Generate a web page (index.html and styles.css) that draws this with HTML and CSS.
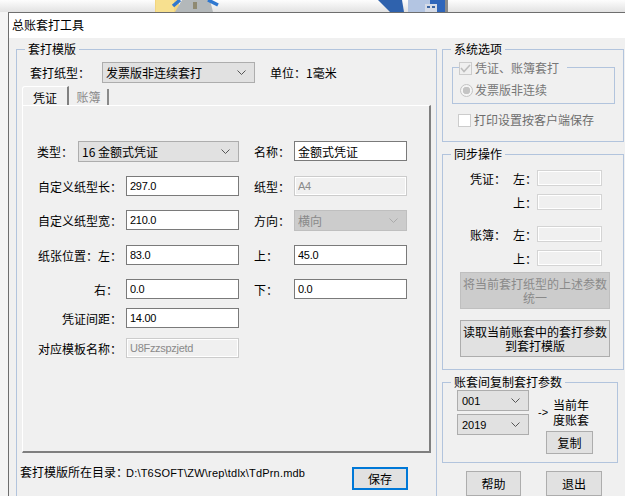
FILE: index.html
```html
<!DOCTYPE html>
<html lang="zh">
<head>
<meta charset="utf-8">
<title>总账套打工具</title>
<link rel="stylesheet" href="styles.css">
</head>
<body>
<div class="desktop">
  <svg class="desk-icon folder" width="65" height="12" viewBox="0 0 65 12">
    <rect x="0" y="0" width="24" height="12" fill="#f3d57f"/>
    <rect x="1" y="0" width="18" height="12" fill="#f7e08f"/>
    <path d="M20 12 L27 0 H55 L58 12 Z" fill="#b3b8ba"/>
    <path d="M18 6 L25 0 M53 0 L63 5" stroke="#2f78d0" stroke-width="3.5" fill="none"/>
    <rect x="38" y="2" width="4" height="7" fill="#8f8a72"/>
  </svg>
  <svg class="desk-icon book" width="72" height="12" viewBox="0 0 72 12">
    <path d="M0 0 H24 L26 12 H12 Z" fill="#2f62ad"/>
    <rect x="30" y="0" width="37" height="12" fill="#2f66bb"/>
    <rect x="30" y="0" width="22" height="12" fill="#b3c5e2"/>
    <rect x="47" y="4" width="12" height="8" fill="#d6dce8"/>
    <rect x="49" y="6" width="3" height="2" fill="#3c64a0"/>
    <rect x="54" y="6" width="3" height="2" fill="#3c64a0"/>
    <rect x="67" y="0" width="3" height="12" fill="#8a8a8a"/>
  </svg>
</div>
<main class="window">
  <header class="title">总账套打工具</header>
  <div class="client">
    <fieldset class="group template">
      <legend>套打模版</legend>
      <div class="template-body">
        <div class="paper-row">
          <span class="paper-label">套打纸型：</span>
          <div class="select paper-select"><span>发票版非连续套打</span><svg class="chev" width="9" height="5" viewBox="0 0 9 5"><path d="M0.5 0.5 L4.5 4.5 L8.5 0.5" fill="none" stroke="#555"/></svg></div>
          <span class="unit">单位：1毫米</span>
        </div>
        <div class="tabs">
          <div class="tab active">凭证</div>
          <div class="tab">账簿</div>
        </div>
        <div class="panel">
          <div class="form">
            <label class="type-label">类型：</label>
            <div class="select type-select"><span>16 金额式凭证</span><svg class="chev" width="9" height="5" viewBox="0 0 9 5"><path d="M0.5 0.5 L4.5 4.5 L8.5 0.5" fill="none" stroke="#555"/></svg></div>
            <label class="side">名称：</label><input class="field cjk" value="金额式凭证">

            <label class="wide">自定义纸型长：</label><input class="field" value="297.0">
            <label class="side">纸型：</label><input class="field" value="A4" disabled>

            <label class="wide">自定义纸型宽：</label><input class="field" value="210.0">
            <label class="side">方向：</label>
            <div class="select off"><span>横向</span><svg class="chev" width="9" height="5" viewBox="0 0 9 5"><path d="M0.5 0.5 L4.5 4.5 L8.5 0.5" fill="none" stroke="#aaa"/></svg></div>

            <label class="wide">纸张位置：左：</label><input class="field" value="83.0">
            <label class="side">上：</label><input class="field" value="45.0">

            <label class="wide right">右：</label><input class="field" value="0.0">
            <label class="side">下：</label><input class="field" value="0.0">

            <label class="wide">凭证间距：</label><input class="field" value="14.00">
            <span class="blank"></span>

            <label class="wide">对应模板名称：</label><input class="field" value="U8Fzzspzjetd" disabled>
            <span class="blank"></span>
          </div>
        </div>
        <div class="path-row">
          <span class="path"><span>套打模版所在目录：</span><span class="path-value">D:\T6SOFT\ZW\rep\tdlx\TdPrn.mdb</span></span>
          <button class="btn save">保存</button>
        </div>
      </div>
    </fieldset>
    <div class="side-col">
      <fieldset class="group system">
        <legend>系统选项</legend>
        <div class="system-body">
          <fieldset class="group inner">
            <legend class="check-legend"><span class="check checked"><svg width="11" height="9" viewBox="0 0 11 9"><path d="M1 4 L4 7.5 L10 1" fill="none" stroke="#bdbdbd" stroke-width="1.6"/></svg></span><span class="dim">凭证、账簿套打</span></legend>
            <div class="radio-row"><span class="radio"></span><span class="dim">发票版非连续</span></div>
          </fieldset>
          <div class="client-save"><span class="check"></span><span class="dim2">打印设置按客户端保存</span></div>
        </div>
      </fieldset>
      <fieldset class="group sync">
        <legend>同步操作</legend>
        <div class="sync-body">
          <div class="sync-grid">
            <span>凭证：</span><span>左：</span><input class="mini" disabled>
            <span></span><span>上：</span><input class="mini" disabled>
            <span>账簿：</span><span>左：</span><input class="mini" disabled>
            <span></span><span>上：</span><input class="mini" disabled>
          </div>
          <button class="btn wide-btn off-btn">将当前套打纸型的上述参数统一</button>
          <button class="btn wide-btn read">读取当前账套中的套打参数到套打模版</button>
        </div>
      </fieldset>
      <fieldset class="group copy">
        <legend>账套间复制套打参数</legend>
        <div class="copy-body">
          <div class="copy-selects">
            <div class="select"><span>001</span><svg class="chev" width="9" height="5" viewBox="0 0 9 5"><path d="M0.5 0.5 L4.5 4.5 L8.5 0.5" fill="none" stroke="#555"/></svg></div>
            <div class="select"><span>2019</span><svg class="chev" width="9" height="5" viewBox="0 0 9 5"><path d="M0.5 0.5 L4.5 4.5 L8.5 0.5" fill="none" stroke="#555"/></svg></div>
          </div>
          <span class="arrow">-&gt;</span>
          <div class="copy-right">
            <span class="current">当前年度账套</span>
            <button class="btn copy-btn">复制</button>
          </div>
        </div>
      </fieldset>
      <div class="actions">
        <button class="btn action">帮助</button>
        <button class="btn action">退出</button>
      </div>
    </div>
  </div>
</main>
</body>
</html>
```
FILE: styles.css
```css
* { box-sizing: border-box; }
html, body { height: 100%; overflow: hidden; }
body {
  margin: 0;
  width: 625px;
  height: 496px;
  background: #f4f4f4;
  font: 12px/14px "Noto Sans CJK SC", "Liberation Sans", sans-serif;
  color: #000;
}
.desktop {
  position: relative;
  height: 12px;
  background: linear-gradient(#fdfdfd, #e2e2e2);
}
.desk-icon { position: absolute; top: 0; }
.folder { left: 155px; }
.book { left: 378px; }

.window {
  height: 484px;
  margin-left: 8px;
  border-top: 1px solid #6e6e6e;
  border-left: 1px solid #6e6e6e;
  background: #f0f0f0;
}
.title {
  height: 25px;
  padding-left: 3px;
  background: #fff;
  font-size: 12px;
  line-height: 24px;
}
.client {
  display: flex;
  gap: 5px;
  padding: 4px 0 0 7px;
}

.group {
  margin: 0;
  padding: 0;
  min-width: 0;
  border: 1px solid #b2c4dd;
}
.group > legend {
  padding: 0 3px;
  margin-left: 8px;
  height: 14px;
  line-height: 14px;
}

.template {
  flex: none;
  width: 421px;
  height: 470px;
}
.template-body { padding: 0 5px; }
.paper-row {
  display: flex;
  align-items: center;
  height: 21px;
  margin-top: 6px;
}
.paper-label { width: 80px; padding-left: 8px; flex: none; }
.paper-select { width: 153px; flex: none; }
.unit { margin-left: 15px; }

.select {
  display: flex;
  align-items: center;
  justify-content: space-between;
  height: 21px;
  padding: 0 8px 0 3px;
  border: 1px solid #adadad;
  background: #e1e1e1;
  font-family: "Noto Sans CJK SC", "Liberation Sans", sans-serif;
  font-size: 12px;
}
.chev { flex: none; }

.tabs {
  display: flex;
  align-items: flex-end;
  height: 19px;
  margin-top: 3px;
}
.tab {
  width: 39px;
  height: 16px;
  padding-top: 1px;
  text-align: center;
  color: #8a8a8a;
  border-right: 2px solid #8a8a8a;
}
.tab.active {
  width: 47px;
  height: 19px;
  padding: 4px 2px 0;
  color: #000;
  border-top: 1px solid #fff;
  border-left: 1px solid #fff;
  border-top-left-radius: 3px;
  background: #f0f0f0;
  border-right-color: #808080;
  margin-right: 1px;
}

.panel {
  width: 409px;
  height: 348px;
  padding-top: 35px;
  border-top: 1px solid #fff;
  border-left: 1px solid #fff;
  border-right: 2px solid #7f7f7f;
  border-bottom: 2px solid #7f7f7f;
}
.form {
  display: grid;
  margin-left: 14px;
  grid-template-columns: 41px 48px 113px 15px 40px 113px;
  grid-template-rows: 35px 34px 35px 34px 29px 30px 20px;
  align-items: start;
}
.form label { line-height: 21px; height: 20px; }
.type-select { grid-column: 2 / 4; }
.wide { grid-column: 1 / 3; text-align: right; padding-right: 4px; }
.wide.right { padding-right: 8px; }
.side { grid-column: 5; }
.form input { grid-column: 3; }
.form .side + input, .form .side + .select { grid-column: 6; }
.blank { grid-column: 5 / 7; }

.field {
  width: 113px;
  height: 20px;
  margin: 0;
  padding: 0 0 0 3px;
  border: 1px solid #7a7a7a;
  border-radius: 0;
  background: #fff;
  color: #000;
  font: 11px/18px "Liberation Sans", "Noto Sans CJK SC", sans-serif;
  letter-spacing: -0.3px;
  outline: 0;
}
.field.cjk { font: 12px/18px "Noto Sans CJK SC", sans-serif; letter-spacing: 0; }
.field:disabled {
  border-color: #cccccc;
  background: #f0f0f0;
  color: #8a8a8a;
  box-shadow: inset 0 0 0 1px #fff;
}
.select.off {
  border-color: #bfbfbf;
  background: #cccccc;
  color: #8a8a8a;
}

.path-row {
  display: flex;
  align-items: center;
  height: 23px;
  margin: 14px 0 0 -2px;
}
.path { width: 332px; flex: none; margin-top: -12px; white-space: nowrap; }
.path-value {
  font: 11px/14px "Liberation Sans", sans-serif;
  letter-spacing: 0.2px;
  margin-left: -2px;
}
.btn {
  margin: 0;
  padding: 0;
  border: 1px solid #adadad;
  border-radius: 0;
  background: #e1e1e1;
  color: #000;
  font: 12px/14px "Noto Sans CJK SC", sans-serif;
}
.save {
  width: 56px;
  height: 23px;
  border: 2px solid #0078d7;
}

.side-col {
  flex: none;
  width: 182px;
  display: flex;
  flex-direction: column;
}
.system { height: 100px; }
.system-body { padding: 0 9px; }
.group.inner {
  height: 45px;
  width: 163px;
  margin-top: 3px;
}
.group > .check-legend {
  display: flex;
  align-items: flex-end;
  height: 16px;
  margin-left: 6px;
  padding: 0 8px 0 0;
  line-height: 14px;
}
.check {
  display: inline-flex;
  align-items: center;
  justify-content: center;
  flex: none;
  width: 13px;
  height: 13px;
  margin-right: 3px;
  border: 1px solid #cccccc;
  background: #fff;
}
.check.checked { background: #efefef; }
.dim { color: #777; }
.dim2 { color: #6d6d6d; }
.radio-row { display: flex; align-items: center; height: 14px; margin: 8px 0 0 7px; }
.radio {
  flex: none;
  width: 13px;
  height: 13px;
  margin-right: 2px;
  border: 1px solid #c4c4c4;
  border-radius: 50%;
  background: radial-gradient(circle, #c4c4c4 0 3.5px, #f4f4f4 4px);
}
.client-save { display: flex; align-items: center; height: 14px; margin: 9px 0 0 6px; }

.sync {
  height: 223px;
  margin-top: 5px;
}
.sync-body { padding-left: 17px; }
.sync-grid {
  display: grid;
  grid-template-columns: 43px 24px 65px;
  grid-template-rows: 24px 32px 24px 16px;
  margin: 9px 0 0 10px;
  align-items: start;
}
.sync-grid span { line-height: 17px; }
.mini {
  width: 65px;
  height: 16px;
  margin: 0;
  padding: 0;
  border: 1px solid #d4d4d4;
  box-shadow: inset 0 0 0 1px #fff;
  background: #f0f0f0;
}
.wide-btn {
  display: block;
  width: 150px;
  height: 37px;
  line-height: 14px;
}
.off-btn {
  margin-top: 6px;
  background: #cccccc;
  border-color: #bfbfbf;
  color: #8a8a8a;
}
.read { margin-top: 11px; }

.copy {
  width: 176px;
  height: 88px;
  margin-top: 5px;
}
.copy-body { display: flex; margin-top: 1px; padding-left: 14px; }
.copy-selects { display: flex; flex-direction: column; gap: 3px; width: 72px; flex: none; }
.copy-selects .select { padding-left: 4px; font: 11px/14px "Liberation Sans", sans-serif; }
.arrow { margin: 15px 0 0 9px; width: 15px; flex: none; font: 11px/14px "Liberation Sans", sans-serif; }
.copy-right { display: flex; flex-direction: column; align-items: flex-start; }
.current { width: 36px; line-height: 15px; margin-top: 7px; }
.copy-btn { width: 47px; height: 23px; margin: 4px 0 0 -7px; }

.actions {
  display: flex;
  gap: 25px;
  margin: 8px 0 0 24px;
}
.action { width: 55px; height: 25px; }
.actions .action + .action { width: 56px; }
```
